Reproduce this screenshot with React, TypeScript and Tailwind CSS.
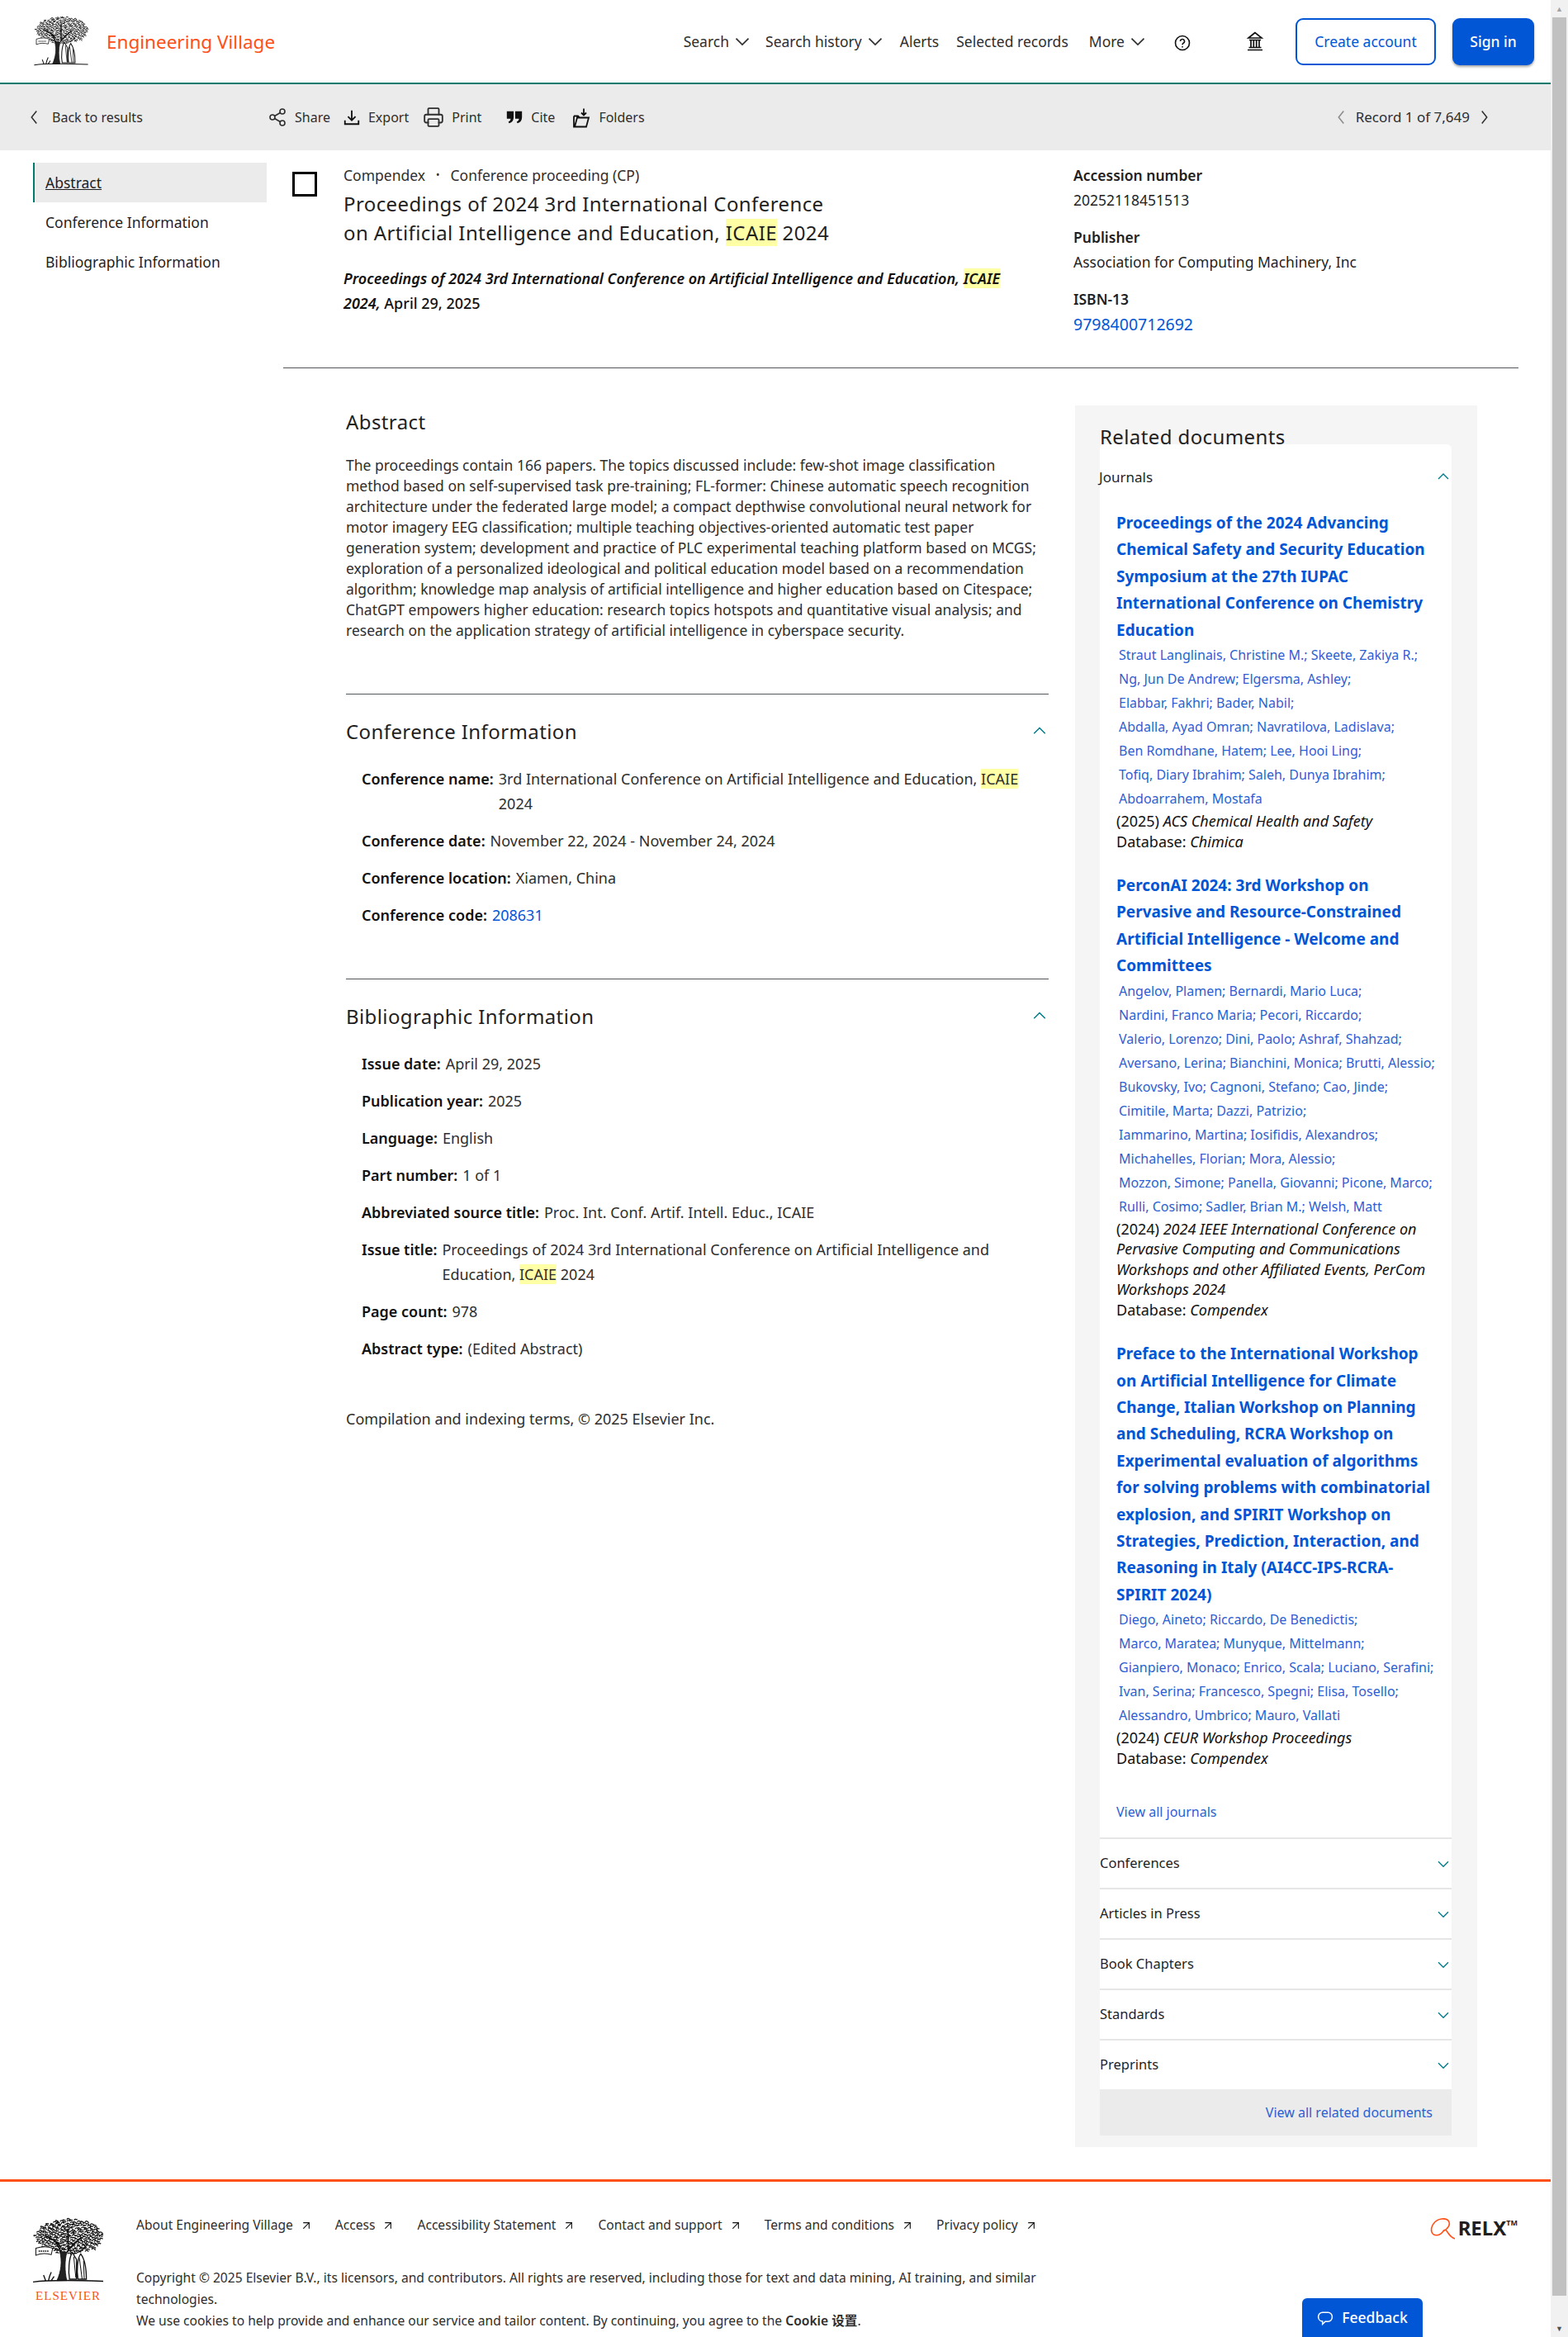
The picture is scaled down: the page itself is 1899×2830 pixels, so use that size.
import { ArrowUpRight, Printer, Share2 } from "lucide-react"
import type { ReactNode } from "react"

const sans = "font-['Noto_Sans','Open_Sans',sans-serif]"

function Mark({ children }: { children: ReactNode }) {
  return <mark className="bg-[#ffffa5] text-inherit">{children}</mark>
}

function Chevron({ dir, className }: { dir: "up" | "down" | "left" | "right"; className?: string }) {
  const points = {
    up: "3,15 12,6 21,15",
    down: "3,8 12,17 21,8",
    left: "15,2 7,12 15,22",
    right: "9,2 17,12 9,22",
  }[dir]
  return (
    <svg viewBox="0 0 24 24" fill="none" stroke="currentColor" strokeWidth="2" className={className}>
      <polyline points={points} />
    </svg>
  )
}

// scattered leaf strokes for the engraved tree logo
const leaves = Array.from({ length: 260 }, (_, i) => {
  const a = i * 2.399
  const r = Math.sqrt(i / 260)
  const x = 50 + Math.cos(a) * r * 48
  const y = 26 + Math.sin(a) * r * 25
  const t = (i * 37) % 6
  return `M${x.toFixed(1)} ${y.toFixed(1)}q${t - 3} ${-2 - t / 3} ${3 + t / 2} ${(t % 3) - 1}`
}).join("")

function TreeLogo({ className }: { className?: string }) {
  return (
    <svg viewBox="0 0 100 92" className={className} fill="none" stroke="#111">
      <path d={leaves} strokeWidth="1.5" />
      <path d="M30 30c6 8 10 14 11 22M70 26c-8 6-16 12-22 22M50 14v30M18 24c8 4 16 8 22 16" strokeWidth="2" />
      <path d="M38 46c4 14 2 30-4 42h14c-3-14-3-28 0-40z" fill="#222" strokeWidth="1" />
      <path d="M56 48c-5 8-6 26-4 38h10V58zM68 50c-5 6-6 24-4 36h12c0-14-2-28-8-36z" fill="#fff" strokeWidth="1.6" />
      <path d="M58 54l3 30M66 56l4 30M72 60l1 26M60 48l-4-6" strokeWidth="1.2" />
      <path d="M4 42c8-3 18-3 24 0l-2 9c-8-2-15-2-22 1z" fill="#fff" strokeWidth="1.2" />
      <path d="M8 46h15" strokeWidth="1.6" strokeDasharray="2 1" />
      <path d="M0 90c20-3 50-3 100-1M22 88c1-5 2-8 4-12M18 88l-3-8M26 88l4-6" strokeWidth="1.6" />
    </svg>
  )
}

function Topbar() {
  return (
    <header className="flex h-[102px] items-center border-b-2 border-[#007b6e] pl-10 pr-[20px]">
      <TreeLogo className="h-[60px] w-[68px]" />
      <span className="ml-[21px] mt-[2px] text-[22.5px] text-[#ff4f17]">Engineering Village</span>
      <nav className="ml-auto flex items-center text-[17.5px] text-[#2e2e2e]">
        <span>Search</span>
        <Chevron dir="down" className="ml-[6px] h-[20px] w-[20px]" />
        <span className="ml-[18px]">Search history</span>
        <Chevron dir="down" className="ml-[6px] h-[20px] w-[20px]" />
        <span className="ml-[20px]">Alerts</span>
        <span className="ml-[21px]">Selected records</span>
        <span className="ml-[25px]">More</span>
        <Chevron dir="down" className="ml-[6px] h-[20px] w-[20px]" />
        <svg viewBox="0 0 20 20" fill="none" stroke="#111" strokeWidth="1.6" className="ml-[34px] mt-[4px] h-[20px] w-[20px]">
          <circle cx="10" cy="10" r="8.500" />
          <path d="M7.500 8a2.500 2.500 0 1 1 3.600 2.200c-.8.500-1.100 1-1.100 2M10 14v1.500" />
        </svg>
        <svg viewBox="0 0 24 24" fill="none" stroke="#111" strokeWidth="1.7" className="ml-[66px] h-[24px] w-[24px]">
          <path d="M12 1.500 L4 8h16zM5 10.500h14M7 11v8M10.300 11v8M13.700 11v8M17 11v8M4.500 19.500h15M3 22.500h18" />
        </svg>
        <button className="ml-[37px] h-[57px] w-[170px] rounded-[9px] border-2 border-[#0156d6] text-[#0156d6]">Create account</button>
        <button className="ml-[20px] h-[57px] w-[99px] rounded-[9px] bg-[#0156d6] font-medium text-white shadow-[0_2px_3px_rgba(0,0,0,0.35)]">
          Sign in
        </button>
      </nav>
    </header>
  )
}

function ToolItem({ icon, label, className }: { icon: ReactNode; label: string; className?: string }) {
  return (
    <span className={`flex items-center gap-[9px] ${className ?? ""}`}>
      {icon}
      <span>{label}</span>
    </span>
  )
}

function Toolbar() {
  return (
    <div className="flex h-[80px] items-center bg-[#ebebeb] pl-[33px] text-[16px] text-[#2e2e2e]">
      <Chevron dir="left" className="h-[24px] w-[18px]" />
      <span className="ml-[12px] w-[261px]">Back to results</span>
      <ToolItem icon={<Share2 size={24} strokeWidth={1.6} />} label="Share" />
      <ToolItem
        className="ml-[15px]"
        label="Export"
        icon={
          <svg viewBox="0 0 24 24" fill="none" stroke="#111" strokeWidth="2" className="h-[22px] w-[22px]">
            <path d="M12 3v13M7 11l5 5 5-5M3 16v5h18v-5" />
          </svg>
        }
      />
      <ToolItem className="ml-[17px]" icon={<Printer size={26} strokeWidth={1.7} />} label="Print" />
      <ToolItem
        className="ml-[29px]"
        label="Cite"
        icon={
          <svg viewBox="0 0 24 24" fill="#111" className="h-[22px] w-[22px]">
            <path d="M2 4h9v8c0 4-2 7-6 8l-1-2c2-1 3-2 3-4H2zM13 4h9v8c0 4-2 7-6 8l-1-2c2-1 3-2 3-4h-5z" />
          </svg>
        }
      />
      <ToolItem
        className="ml-[20px]"
        label="Folders"
        icon={
          <svg viewBox="0 0 24 24" fill="none" stroke="#111" strokeWidth="1.8" className="h-[25px] w-[24px]">
            <path d="M3 10v13h15l3-11H7L4 23M3 10h5l2 2M15 1v8M12 6l3 3 3-3" />
          </svg>
        }
      />
      <Chevron dir="left" className="ml-auto h-[24px] w-[18px] text-[#8a8a8a]" />
      <span className="ml-[8px] text-[17px]">Record 1 of 7,649</span>
      <Chevron dir="right" className="ml-[8px] mr-[72px] h-[24px] w-[18px]" />
    </div>
  )
}

function SideNav() {
  return (
    <aside className="w-[283px] shrink-0 pt-[15px] text-[17.5px] text-[#1f1f1f]">
      <div className="flex h-[48px] items-center border-l-2 border-[#007b6e] bg-[#ebebeb] pl-[13px] underline">Abstract</div>
      <div className="flex h-[48px] items-center pl-[15px]">Conference Information</div>
      <div className="flex h-[48px] items-center pl-[15px]">Bibliographic Information</div>
    </aside>
  )
}

function RecordHead() {
  return (
    <section className="flex h-[264px] border-b border-[#53565a] pt-[26px]">
      <div className="ml-[11px] h-[30px] w-[30px] shrink-0 border-[3px] border-black" />
      <div className="ml-[32px] w-[884px] shrink-0">
        <div className="-mt-[8px] flex h-[24px] items-center text-[17.5px] text-[#2e2e2e]">
          <span>Compendex</span>
          <span className="mx-[13px] text-[12px]">•</span>
          <span>Conference proceeding (CP)</span>
        </div>
        <h1 className="mt-[5px] text-[24px] leading-[35px] tracking-[0.4px] text-[#1f1f1f]">
          Proceedings of 2024 3rd International Conference
          <br />
          on Artificial Intelligence and Education, <Mark>ICAIE</Mark> 2024
        </h1>
        <p className="mt-[23px] w-[840px] text-[18px] leading-[30px] font-semibold text-[#111]">
          <i>
            Proceedings of 2024 3rd International Conference on Artificial Intelligence and Education, <Mark>ICAIE</Mark> 2024,
          </i>{" "}
          <span className="font-medium">April 29, 2025</span>
        </p>
      </div>
      <div className="-mt-[11px] text-[17.5px] text-[#1f1f1f]">
        <div className="h-[30px] leading-[30px] font-semibold">Accession number</div>
        <div className="h-[30px] leading-[30px]">20252118451513</div>
        <div className="mt-[15px] h-[30px] leading-[30px] font-semibold">Publisher</div>
        <div className="h-[30px] leading-[30px]">Association for Computing Machinery, Inc</div>
        <div className="mt-[15px] h-[30px] leading-[30px] font-semibold">ISBN-13</div>
        <div className="h-[32px] text-[19.5px] leading-[32px] text-[#0156d6]">9798400712692</div>
      </div>
    </section>
  )
}

function SectionHead({ title }: { title: string }) {
  return (
    <div className="flex h-[88px] items-center justify-between border-t border-[#53565a] pt-[3px]">
      <h2 className="text-[24px] tracking-[0.4px] text-[#1f1f1f]">{title}</h2>
      <Chevron dir="up" className="mr-[2px] h-[18px] w-[18px] text-[#007b8a]" />
    </div>
  )
}

function Field({ label, children }: { label: string; children: ReactNode }) {
  return (
    <div className="flex text-[18px] leading-[30px] text-[#2e2e2e]">
      <span className="mr-[6px] shrink-0 font-semibold text-[#111]">{label}</span>
      <span>{children}</span>
    </div>
  )
}

function MainColumn() {
  return (
    <div className="w-[851px] shrink-0">
      <h2 className="mt-[47px] text-[24px] leading-[36px] tracking-[0.4px] text-[#1f1f1f]">Abstract</h2>
      <p className="mt-[22px] text-[17.5px] leading-[25px] text-[#2e2e2e]">
        The proceedings contain 166 papers. The topics discussed include: few-shot image classification method based on
        self-supervised task pre-training; FL-former: Chinese automatic speech recognition architecture under the federated
        large model; a compact depthwise convolutional neural network for motor imagery EEG classification; multiple teaching
        objectives-oriented automatic test paper generation system; development and practice of PLC experimental teaching
        platform based on MCGS; exploration of a personalized ideological and political education model based on a
        recommendation algorithm; knowledge map analysis of artificial intelligence and higher education based on Citespace;
        ChatGPT empowers higher education: research topics hotspots and quantitative visual analysis; and research on the
        application strategy of artificial intelligence in cyberspace security.
      </p>
      <div className="mt-[64px]">
        <SectionHead title="Conference Information" />
        <div className="flex flex-col gap-[15px] pl-[19px]">
          <Field label="Conference name:">
            3rd International Conference on Artificial Intelligence and Education, <Mark>ICAIE</Mark> 2024
          </Field>
          <Field label="Conference date:">November 22, 2024 - November 24, 2024</Field>
          <Field label="Conference location:">Xiamen, China</Field>
          <Field label="Conference code:">
            <span className="text-[#0156d6]">208631</span>
          </Field>
        </div>
      </div>
      <div className="mt-[62px]">
        <SectionHead title="Bibliographic Information" />
        <div className="flex flex-col gap-[15px] pl-[19px]">
          <Field label="Issue date:">April 29, 2025</Field>
          <Field label="Publication year:">2025</Field>
          <Field label="Language:">English</Field>
          <Field label="Part number:">1 of 1</Field>
          <Field label="Abbreviated source title:">Proc. Int. Conf. Artif. Intell. Educ., ICAIE</Field>
          <Field label="Issue title:">
            Proceedings of 2024 3rd International Conference on Artificial Intelligence and Education, <Mark>ICAIE</Mark> 2024
          </Field>
          <Field label="Page count:">978</Field>
          <Field label="Abstract type:">(Edited Abstract)</Field>
        </div>
      </div>
      <p className="mt-[55px] text-[18px] leading-[30px] text-[#2e2e2e]">Compilation and indexing terms, © 2025 Elsevier Inc.</p>
    </div>
  )
}

const journals = [
  {
    title: "Proceedings of the 2024 Advancing Chemical Safety and Security Education Symposium at the 27th IUPAC International Conference on Chemistry Education",
    authors: [
      "Straut Langlinais, Christine M.; Skeete, Zakiya R.;",
      "Ng, Jun De Andrew; Elgersma, Ashley;",
      "Elabbar, Fakhri; Bader, Nabil;",
      "Abdalla, Ayad Omran; Navratilova, Ladislava;",
      "Ben Romdhane, Hatem; Lee, Hooi Ling;",
      "Tofiq, Diary Ibrahim; Saleh, Dunya Ibrahim;",
      "Abdoarrahem, Mostafa",
    ],
    year: "(2025)",
    source: "ACS Chemical Health and Safety",
    db: "Chimica",
  },
  {
    title: "PerconAI 2024: 3rd Workshop on Pervasive and Resource-Constrained Artificial Intelligence - Welcome and Committees",
    authors: [
      "Angelov, Plamen; Bernardi, Mario Luca;",
      "Nardini, Franco Maria; Pecori, Riccardo;",
      "Valerio, Lorenzo; Dini, Paolo; Ashraf, Shahzad;",
      "Aversano, Lerina; Bianchini, Monica; Brutti, Alessio;",
      "Bukovsky, Ivo; Cagnoni, Stefano; Cao, Jinde;",
      "Cimitile, Marta; Dazzi, Patrizio;",
      "Iammarino, Martina; Iosifidis, Alexandros;",
      "Michahelles, Florian; Mora, Alessio;",
      "Mozzon, Simone; Panella, Giovanni; Picone, Marco;",
      "Rulli, Cosimo; Sadler, Brian M.; Welsh, Matt",
    ],
    year: "(2024)",
    source: "2024 IEEE International Conference on Pervasive Computing and Communications Workshops and other Affiliated Events, PerCom Workshops 2024",
    db: "Compendex",
  },
  {
    title: "Preface to the International Workshop on Artificial Intelligence for Climate Change, Italian Workshop on Planning and Scheduling, RCRA Workshop on Experimental evaluation of algorithms for solving problems with combinatorial explosion, and SPIRIT Workshop on Strategies, Prediction, Interaction, and Reasoning in Italy (AI4CC-IPS-RCRA-SPIRIT 2024)",
    authors: [
      "Diego, Aineto; Riccardo, De Benedictis;",
      "Marco, Maratea; Munyque, Mittelmann;",
      "Gianpiero, Monaco; Enrico, Scala; Luciano, Serafini;",
      "Ivan, Serina; Francesco, Spegni; Elisa, Tosello;",
      "Alessandro, Umbrico; Mauro, Vallati",
    ],
    year: "(2024)",
    source: "CEUR Workshop Proceedings",
    db: "Compendex",
  },
]

function RelatedPanel() {
  return (
    <aside className="mt-[45px] h-[2109px] w-[487px] shrink-0 bg-[#f5f5f5] pl-[30px] pr-[31px]">
      <h2 className="h-[47px] pt-[20px] text-[24px] leading-[36px] tracking-[0.4px] text-[#1f1f1f]">Related documents</h2>
      <div className="rounded-t-[6px] bg-white">
        <div className="flex h-[79px] items-center justify-between text-[17px] text-[#1f1f1f]">
          <span className="-ml-[1px]">Journals</span>
          <Chevron dir="up" className="mr-[2px] h-[16px] w-[16px] text-[#007b8a]" />
        </div>
        <div className="pl-[20px]">
          {journals.map((j) => (
            <article key={j.title} className="mb-[22px] mt-[25px] w-[384px] first:mt-0">
              <h3 className="text-[19px] leading-[32.4px] font-bold text-[#0156d6]">{j.title}</h3>
              <div className="pl-[3px] text-[16px] leading-[29px] text-[#2b5fd3]">
                {j.authors.map((a) => (
                  <div key={a} className="whitespace-nowrap">
                    {a}
                  </div>
                ))}
              </div>
              <p className="text-[18px] leading-[24.5px] text-[#111]">
                {j.year} <i>{j.source}</i>
                <br />
                Database: <i>{j.db}</i>
              </p>
            </article>
          ))}
          <div className="pb-[19px] pt-[19px] text-[16px] leading-[24px] text-[#2b5fd3]">View all journals</div>
        </div>
        {["Conferences", "Articles in Press", "Book Chapters", "Standards", "Preprints"].map((name) => (
          <div key={name} className="flex h-[61px] items-center justify-between border-t-2 border-[#e6e6e6] text-[16.500px] text-[#1f1f1f]">
            <span>{name}</span>
            <Chevron dir="down" className="mr-[2px] h-[16px] w-[16px] text-[#007b8a]" />
          </div>
        ))}
        <div className="flex h-[56px] items-center justify-end bg-[#ebebeb] pr-[23px] text-[16px] text-[#2b5fd3]">
          View all related documents
        </div>
      </div>
    </aside>
  )
}

function Footer() {
  const links = ["About Engineering Village", "Access", "Accessibility Statement", "Contact and support", "Terms and conditions", "Privacy policy"]
  return (
    <footer className="relative h-[191px] border-t-[3px] border-[#ff4f17] pl-10 pr-[40px]">
      <div className="flex pt-[43px]">
        <div className="w-[85px] shrink-0">
          <TreeLogo className="h-[82px] w-[85px]" />
          <div className="mt-[2px] text-center font-['Liberation_Serif',serif] text-[15px] tracking-[1px] text-[#ff4f17]">ELSEVIER</div>
        </div>
        <div className="ml-[40px] w-[1110px] text-[15.600px] text-[#2e2e2e]">
          <div className="-mt-[3px] flex h-[26px] items-center gap-[27px]">
            {links.map((l) => (
              <span key={l} className="flex items-center gap-[8px]">
                {l}
                <ArrowUpRight size={16} strokeWidth={1.7} className="text-[#111]" />
              </span>
            ))}
          </div>
          <p className="mt-[37px] leading-[26px]">
            Copyright © 2025 Elsevier B.V., its licensors, and contributors. All rights are reserved, including those for text and data mining, AI training, and similar technologies.
          </p>
          <p className="leading-[26px]">
            We use cookies to help provide and enhance our service and tailor content. By continuing, you agree to the{" "}
            <b className="font-['Noto_Sans','Noto_Sans_CJK_SC',sans-serif] font-semibold">Cookie 设置</b>.
          </p>
        </div>
        <div className="ml-auto flex items-start">
          <svg viewBox="0 0 34 28" fill="none" stroke="#ff4f17" strokeWidth="1.600" className="h-[28px] w-[34px]">
            <path d="M20 15C28 8 24 1 15 2 6 3 1 12 3 18c2 5 9 5 13 0 2-3 4-4 6 0 2 3 5 7 9 8" />
          </svg>
          <span className="-mt-[2px] ml-[1px] text-[24px] leading-[30px] font-bold text-[#1f1f1f]">RELX</span>
          <span className="text-[9px] leading-[14px] font-bold text-[#1f1f1f]">TM</span>
        </div>
      </div>
      <div className="absolute bottom-0 right-[155px] flex h-[47px] w-[146px] items-center justify-center gap-[10px] rounded-t-[6px] bg-[#0156d6] text-[17.500px] font-medium text-white">
        <svg viewBox="0 0 24 24" fill="none" stroke="#fff" strokeWidth="1.800" className="h-[20px] w-[20px]">
          <path d="M8 4h8a6 6 0 0 1 6 6v1a6 6 0 0 1-6 6h-4l-4 4v-4.300A6 6 0 0 1 2 11v-1a6 6 0 0 1 6-6z" />
        </svg>
        Feedback
      </div>
    </footer>
  )
}

function ScrollTrack() {
  return (
    <div className="flex w-[21px] shrink-0 flex-col items-center bg-[#f1f1f1] px-[2px]">
      <div className="flex h-[21px] items-center text-[9px] leading-none text-[#a3a3a3]">▲</div>
      <div className="h-[2759px] w-full bg-[#c1c1c1]" />
      <div className="mt-auto flex h-[21px] items-center text-[9px] leading-none text-[#505050]">▼</div>
    </div>
  )
}

export default function App() {
  return (
    <div className={`flex h-[2830px] bg-white ${sans}`}>
      <div className="flex min-w-0 flex-1 flex-col">
        <Topbar />
        <Toolbar />
        <main className="flex flex-1 pl-10 pr-[39px]">
          <SideNav />
          <div className="ml-[20px] flex-1">
            <RecordHead />
            <div className="flex pl-[76px]">
              <MainColumn />
              <div className="ml-[32px]">
                <RelatedPanel />
              </div>
            </div>
          </div>
        </main>
        <Footer />
      </div>
      <ScrollTrack />
    </div>
  )
}
